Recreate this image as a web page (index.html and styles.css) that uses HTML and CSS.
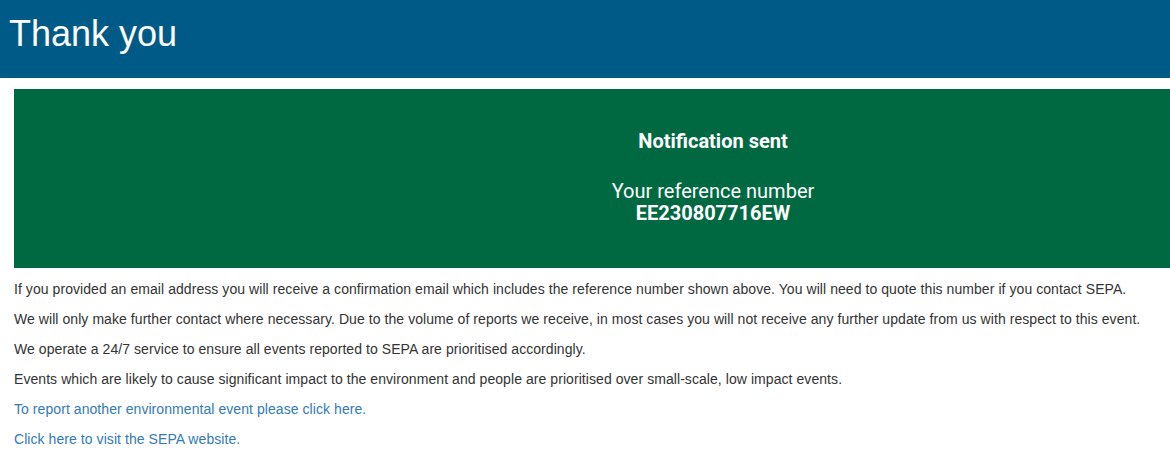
FILE: index.html
```html
<!DOCTYPE html>
<html lang="en">
<head>
<meta charset="utf-8">
<title>Thank you</title>
<link rel="stylesheet" href="styles.css">
</head>
<body>
<header class="page-header">
  <h1 class="page-title">Thank you</h1>
</header>
<main class="content">
  <section class="confirm-panel">
    <h2 class="confirm-title">Notification sent</h2>
    <p class="confirm-line">Your reference number</p>
    <p class="confirm-line confirm-ref">EE230807716EW</p>
  </section>
  <p class="info">If you provided an email address you will receive a confirmation email which includes the reference number shown above. You will need to quote this number if you contact SEPA.</p>
  <p class="info">We will only make further contact where necessary. Due to the volume of reports we receive, in most cases you will not receive any further update from us with respect to this event.</p>
  <p class="info">We operate a 24/7 service to ensure all events reported to SEPA are prioritised accordingly.</p>
  <p class="info">Events which are likely to cause significant impact to the environment and people are prioritised over small-scale, low impact events.</p>
  <p class="info"><a class="link" href="#">To report another environmental event please click here.</a></p>
  <p class="info"><a class="link" href="#">Click here to visit the SEPA website.</a></p>
</main>
</body>
</html>
```
FILE: styles.css
```css
html, body {
  margin: 0;
  padding: 0;
  background: #ffffff;
}

body {
  font-family: "Liberation Sans", Arial, sans-serif;
  font-size: 14px;
  line-height: 20px;
  color: #333333;
}

.page-header {
  background: #005a87;
  height: 78px;
  box-sizing: border-box;
  padding: 14px 0 0 9px;
}

.page-title {
  margin: 0;
  font-family: "Liberation Sans", Arial, sans-serif;
  font-weight: normal;
  font-size: 36px;
  line-height: 39.6px;
  color: #ffffff;
}

.content {
  padding: 11px 0 0 14px;
}

.confirm-panel {
  background: #006942;
  color: #ffffff;
  font-family: Roboto, "Liberation Sans", Arial, sans-serif;
  text-align: center;
  padding: 41px 0 44px 242px;
  margin-bottom: 11px;
}

.confirm-title {
  margin: 0 0 28px;
  font-size: 20px;
  line-height: 22px;
  font-weight: bold;
}

.confirm-line {
  margin: 0;
  font-size: 20px;
  line-height: 22px;
}

.confirm-ref {
  font-weight: bold;
}

.info {
  margin: 0 0 10px;
  letter-spacing: 0.065px;
}

.link {
  color: #337ab7;
  text-decoration: none;
}
```
